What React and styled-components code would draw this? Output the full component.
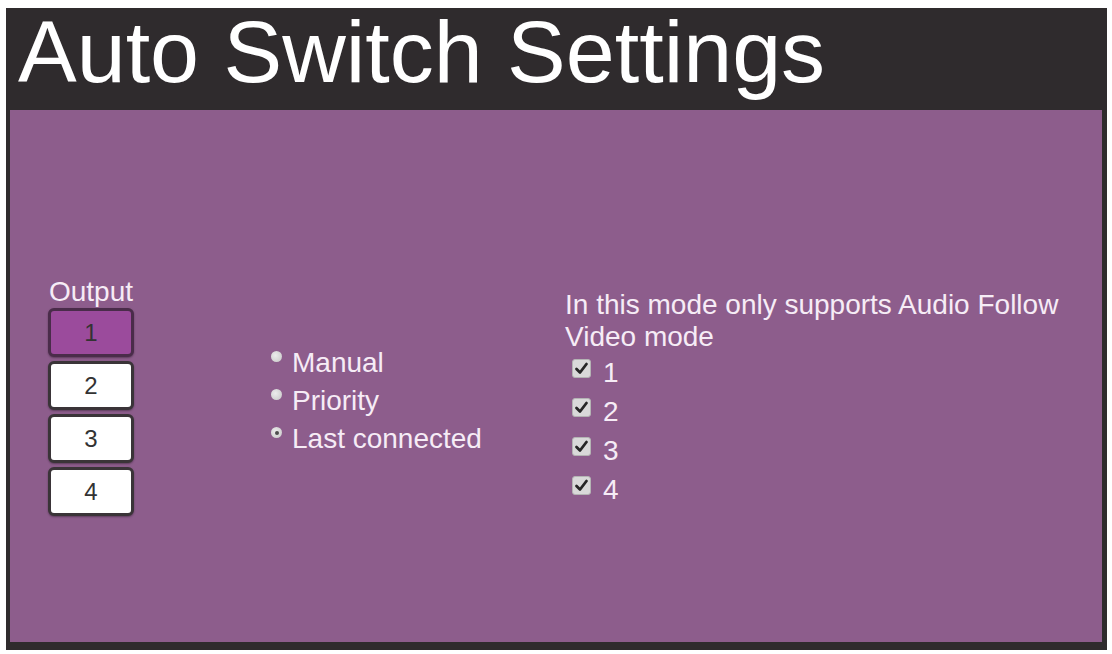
import styled, { createGlobalStyle } from "styled-components";

const GlobalStyle = createGlobalStyle`
    html, body {
        margin: 0;
        padding: 0;
        background: #ffffff;
    }

    body {
        font-family: "Liberation Sans", Arial, sans-serif;
    }
`

const Page = styled.div`
    width: 1112px;
    height: 654px;
    box-sizing: border-box;
    padding: 8px 5px 4px 6px;
`

const Frame = styled.div`
    height: 100%;
    display: flex;
    flex-direction: column;
    background: #2f2b2d;
    padding: 0 5px 8px 4px;
    box-sizing: border-box;
`

const Header = styled.h1`
    margin: 0;
    height: 102px;
    padding-left: 8px;
    font-size: 88px;
    line-height: 88px;
    font-weight: normal;
    color: #ffffff;
`

const Panel = styled.div`
    flex: 1;
    display: grid;
    grid-template-columns: 220px 297px 1fr;
    align-items: center;
    padding: 42px 0 0 38px;
    background: #8d5d8c;
    color: #f6ecf6;
    font-size: 28px;
`

const OutputColumn = styled.div`
    width: 86px;
    display: flex;
    flex-direction: column;
    align-items: center;
    gap: 4px;
`

const Label = styled.div`
    line-height: 28px;
    margin-bottom: -2px;
`

const OutputButton = styled.button`
    width: 86px;
    height: 49px;
    box-sizing: border-box;
    border: 3px solid ${(p) => (p.$active ? "#4a2c4a" : "#3a3438")};
    border-radius: 6px;
    background: ${(p) => (p.$active ? "#9b4b9c" : "#ffffff")};
    color: #333333;
    font-family: inherit;
    font-size: 24px;
    padding: 0;
    box-shadow: 0 1px 2px rgba(0, 0, 0, 0.35);
`

const RadioGroup = styled.div`
    display: flex;
    flex-direction: column;
    margin-top: 8px;
`

const Option = styled.label`
    display: flex;
    align-items: flex-start;
    height: ${(p) => p.$row || 38}px;
    line-height: ${(p) => p.$row || 38}px;
    gap: ${(p) => p.$gap || 10}px;
    margin-left: ${(p) => p.$indent || 0}px;
`

const RadioDot = styled.span`
    width: 11px;
    height: 11px;
    margin-top: 7px;
    margin-left: 3px;
    border-radius: 50%;
    background: radial-gradient(circle at 40% 40%, #ececec, #c6c6c6);
    display: flex;
    align-items: center;
    justify-content: center;

    &::after {
        content: "";
        width: 4px;
        height: 4px;
        border-radius: 50%;
        background: ${(p) => (p.$checked ? "#4d4d4d" : "transparent")};
    }
`

const ModeColumn = styled.div`
    display: flex;
    flex-direction: column;
    margin-top: 4px;
`

const Note = styled.p`
    margin: 0;
    line-height: 32px;
`

const CheckBox = styled.span`
    width: 19px;
    height: 19px;
    margin-top: 6px;
    border-radius: 3px;
    background: #d9d9d9;
    border: 1px solid #b4b4b4;
    box-sizing: border-box;
    display: flex;
    align-items: center;
    justify-content: center;
`

const outputs = [1, 2, 3, 4]
const modes = [
    { name: "Manual", checked: false },
    { name: "Priority", checked: false },
    { name: "Last connected", checked: true },
]

function Check() {
    return (
        <svg width="15" height="15" viewBox="0 0 15 15">
            <path d="M2.5 8 L6 11.5 L12.5 3" fill="none" stroke="#262626" strokeWidth="2.8" strokeLinecap="round" strokeLinejoin="round" />
        </svg>
    )
}

export default function App() {
    return (
        <>
            <GlobalStyle />
            <Page>
                <Frame>
                    <Header>Auto Switch Settings</Header>
                    <Panel>
                        <OutputColumn>
                            <Label>Output</Label>
                            {outputs.map((n) => (
                                <OutputButton key={n} $active={n === 1}>{n}</OutputButton>
                            ))}
                        </OutputColumn>

                        <RadioGroup>
                            {modes.map((mode) => (
                                <Option key={mode.name}>
                                    <RadioDot $checked={mode.checked} />
                                    {mode.name}
                                </Option>
                            ))}
                        </RadioGroup>

                        <ModeColumn>
                            <Note>In this mode only supports Audio Follow<br />Video mode</Note>
                            {outputs.map((n) => (
                                <Option key={n} $indent={7} $gap={12} $row={39}>
                                    <CheckBox><Check /></CheckBox>
                                    {n}
                                </Option>
                            ))}
                        </ModeColumn>
                    </Panel>
                </Frame>
            </Page>
        </>
    )
}
